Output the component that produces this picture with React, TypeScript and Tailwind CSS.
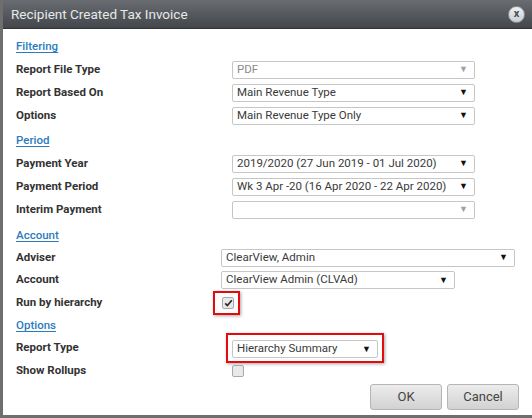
import React from "react"

type Opt = { text: string; disabled?: boolean; width: string }

function Select({ text, disabled, width }: Opt) {
  return (
    <div
      className={`${width} h-[18px] flex items-center justify-between pl-[4px] pr-[6px] border border-[#c6c6c6] rounded-[2px] bg-white text-[11.5px] ${
        disabled ? "text-[#8a8a8a]" : "text-[#3a3a3a]"
      }`}
    >
      <span className="leading-none">{text}</span>
      <span className={`text-[9px] leading-none ${disabled ? "text-[#a0a0a0]" : "text-[#111]"}`}>▼</span>
    </div>
  )
}

function Check({ checked }: { checked?: boolean }) {
  return (
    <div className="w-[12px] h-[12px] rounded-[2px] border border-[#a9a9a9] bg-[#e9e9e9] flex items-center justify-center">
      {checked && (
        <svg width="9" height="8" viewBox="0 0 9 8">
          <path d="M1.2 4.4 L3.4 6.5 L7.8 1.3" stroke="#2a2a2a" strokeWidth="1.7" fill="none" />
        </svg>
      )}
    </div>
  )
}

function Section({ title, className }: { title: string; className?: string }) {
  return (
    <div className={`h-[16px] flex items-center pl-[16px] ${className ?? ""}`}>
      <span className="text-[11.5px] font-medium text-[#2a7cbf] underline underline-offset-2">{title}</span>
    </div>
  )
}

function Row({ label, children, h = "h-[23px]", indent = "pl-[232px]" }: { label: string; children: React.ReactNode; h?: string; indent?: string }) {
  return (
    <div className={`${h} flex items-center relative`}>
      <div className="absolute left-[16px] text-[11.5px] font-bold text-[#333]">{label}</div>
      <div className={`${indent} flex items-center`}>{children}</div>
    </div>
  )
}

export default function App() {
  return (
    <div className="w-[532px] h-[418px] bg-white border-l-[3px] border-b-[3px] border-[#6e6e6e] flex flex-col" style={{ fontFamily: "Roboto, 'Liberation Sans', sans-serif" }}>
      <div className="h-[29px] shrink-0 flex items-center justify-between pl-[8px] pr-[7px] bg-gradient-to-b from-[#696d72] to-[#43474c] border-b border-[#2f3236]">
        <span className="text-[13.5px] text-[#e8e8e8]">Recipient Created Tax Invoice</span>
        <div className="w-[17px] h-[17px] rounded-full bg-gradient-to-b from-[#eef1f4] to-[#c9ced3] border border-[#8d9297] flex items-center justify-center text-[11px] font-bold text-[#4a4e53] leading-none pb-[1px]">
          x
        </div>
      </div>

      <div className="flex-1 flex flex-col">
        <Section title="Filtering" className="mt-[10px] -ml-[3px]" />
        <div className="-ml-[3px] mt-[3px]">
          <Row label="Report File Type"><Select text="PDF" disabled width="w-[243px]" /></Row>
          <Row label="Report Based On"><Select text="Main Revenue Type" width="w-[243px]" /></Row>
          <Row label="Options"><Select text="Main Revenue Type Only" width="w-[243px]" /></Row>
        </div>

        <Section title="Period" className="mt-[6px] -ml-[3px]" />
        <div className="-ml-[3px] mt-[3px]">
          <Row label="Payment Year"><Select text="2019/2020 (27 Jun 2019 - 01 Jul 2020)" width="w-[243px]" /></Row>
          <Row label="Payment Period"><Select text="Wk 3 Apr -20 (16 Apr 2020 - 22 Apr 2020)" width="w-[243px]" /></Row>
          <Row label="Interim Payment"><Select text="" disabled width="w-[243px]" /></Row>
        </div>

        <Section title="Account" className="mt-[7px] -ml-[3px]" />
        <div className="-ml-[3px] mt-[2px]">
          <Row label="Adviser" indent="pl-[221px]"><Select text="ClearView, Admin" width="w-[294px]" /></Row>
          <Row label="Account" indent="pl-[221px]" h="h-[22px]"><Select text="ClearView Admin (CLVAd)" width="w-[234px]" /></Row>
          <Row label="Run by hierarchy" indent="pl-[213px]" h="h-[24px]">
            <div className="w-[27px] h-[24px] border-2 border-[#e30b0b] shadow-[1px_1px_3px_rgba(0,0,0,0.35)] flex items-center pl-[7px]">
              <Check checked />
            </div>
          </Row>
        </div>

        <Section title="Options" className="mt-[3px] -ml-[3px]" />
        <div className="-ml-[3px] -mt-[1px]">
          <Row label="Report Type" indent="pl-[226px]" h="h-[30px]">
            <div className="w-[158px] h-[30px] border-2 border-[#e30b0b] shadow-[1px_1px_3px_rgba(0,0,0,0.35)] pl-[4px] pt-[5px]">
              <Select text="Hierarchy Summary" width="w-[146px]" />
            </div>
          </Row>
          <Row label="Show Rollups" h="h-[16px]"><Check /></Row>
        </div>

        <div className="flex justify-end gap-[5px] pr-[13px] mt-[5px]">
          <button className="w-[72px] h-[26px] rounded-[3px] border border-[#b5b5b5] bg-gradient-to-b from-[#ececec] to-[#d2d2d2] text-[13px] text-[#444]">OK</button>
          <button className="w-[72px] h-[26px] rounded-[3px] border border-[#b5b5b5] bg-gradient-to-b from-[#ececec] to-[#d2d2d2] text-[13px] text-[#444]">Cancel</button>
        </div>
      </div>
    </div>
  )
}
